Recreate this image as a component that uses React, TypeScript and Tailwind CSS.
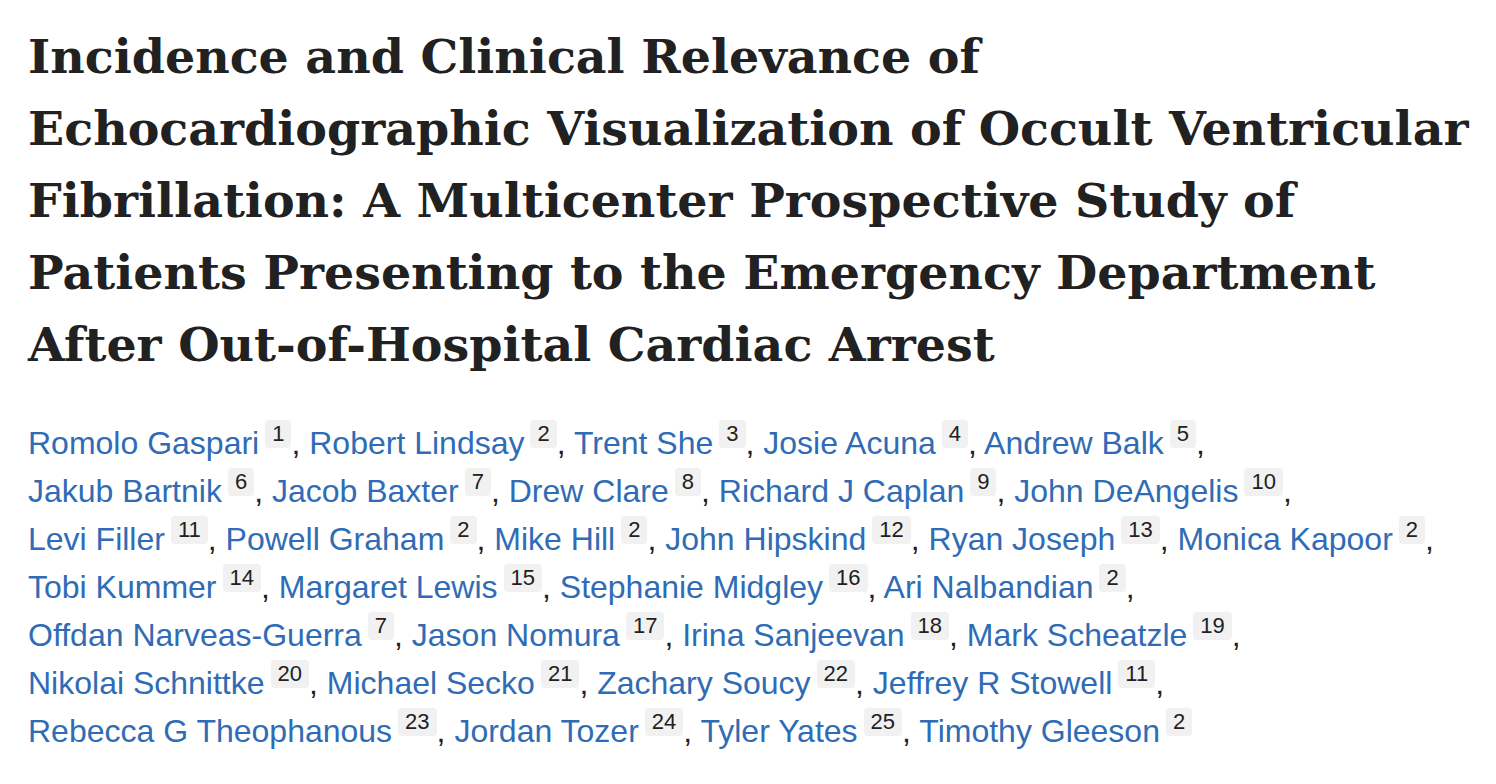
const TITLE_LINES = [
  "Incidence and Clinical Relevance of",
  "Echocardiographic Visualization of Occult Ventricular",
  "Fibrillation: A Multicenter Prospective Study of",
  "Patients Presenting to the Emergency Department",
  "After Out-of-Hospital Cardiac Arrest",
];

type Author = { name: string; aff: string };

// each inner array is one visual line of the author list
const AUTHOR_ROWS: Author[][] = [
  [
    { name: "Romolo Gaspari", aff: "1" },
    { name: "Robert Lindsay", aff: "2" },
    { name: "Trent She", aff: "3" },
    { name: "Josie Acuna", aff: "4" },
    { name: "Andrew Balk", aff: "5" },
  ],
  [
    { name: "Jakub Bartnik", aff: "6" },
    { name: "Jacob Baxter", aff: "7" },
    { name: "Drew Clare", aff: "8" },
    { name: "Richard J Caplan", aff: "9" },
    { name: "John DeAngelis", aff: "10" },
  ],
  [
    { name: "Levi Filler", aff: "11" },
    { name: "Powell Graham", aff: "2" },
    { name: "Mike Hill", aff: "2" },
    { name: "John Hipskind", aff: "12" },
    { name: "Ryan Joseph", aff: "13" },
    { name: "Monica Kapoor", aff: "2" },
  ],
  [
    { name: "Tobi Kummer", aff: "14" },
    { name: "Margaret Lewis", aff: "15" },
    { name: "Stephanie Midgley", aff: "16" },
    { name: "Ari Nalbandian", aff: "2" },
  ],
  [
    { name: "Offdan Narveas-Guerra", aff: "7" },
    { name: "Jason Nomura", aff: "17" },
    { name: "Irina Sanjeevan", aff: "18" },
    { name: "Mark Scheatzle", aff: "19" },
  ],
  [
    { name: "Nikolai Schnittke", aff: "20" },
    { name: "Michael Secko", aff: "21" },
    { name: "Zachary Soucy", aff: "22" },
    { name: "Jeffrey R Stowell", aff: "11" },
  ],
  [
    { name: "Rebecca G Theophanous", aff: "23" },
    { name: "Jordan Tozer", aff: "24" },
    { name: "Tyler Yates", aff: "25" },
    { name: "Timothy Gleeson", aff: "2" },
  ],
];

function AffBadge({ value }: { value: string }) {
  return (
    <span className="ml-[6px] inline-block rounded-[4px] bg-[#f1f1f1] px-[7px] align-[13px] text-[22px] leading-[28px] text-[#212121]">
      {value}
    </span>
  );
}

export default function App() {
  const total = AUTHOR_ROWS.reduce((n, r) => n + r.length, 0);
  let index = 0;

  return (
    <div className="min-h-screen bg-white px-[28px] pt-[20px]">
      <h1
        className="text-[47.5px] font-bold leading-[72px] text-[#212121]"
        style={{ fontFamily: '"DejaVu Serif", "Liberation Serif", serif' }}
      >
        {TITLE_LINES.map((line) => (
          <span key={line} className="block whitespace-nowrap">
            {line}
          </span>
        ))}
      </h1>

      <div
        className="mt-[39px] text-[32px] leading-[48px] text-[#212121]"
        style={{ fontFamily: '"Liberation Sans", Arial, sans-serif' }}
      >
        {AUTHOR_ROWS.map((row, r) => (
          <div key={r} className="whitespace-nowrap">
            {row.map((a) => {
              index += 1;
              const last = index === total;
              return (
                <span key={a.name}>
                  <a href="#" className="text-[#2f6cb5] hover:underline">
                    {a.name}
                  </a>
                  <AffBadge value={a.aff} />
                  {!last && ", "}
                </span>
              );
            })}
          </div>
        ))}
      </div>
    </div>
  );
}
